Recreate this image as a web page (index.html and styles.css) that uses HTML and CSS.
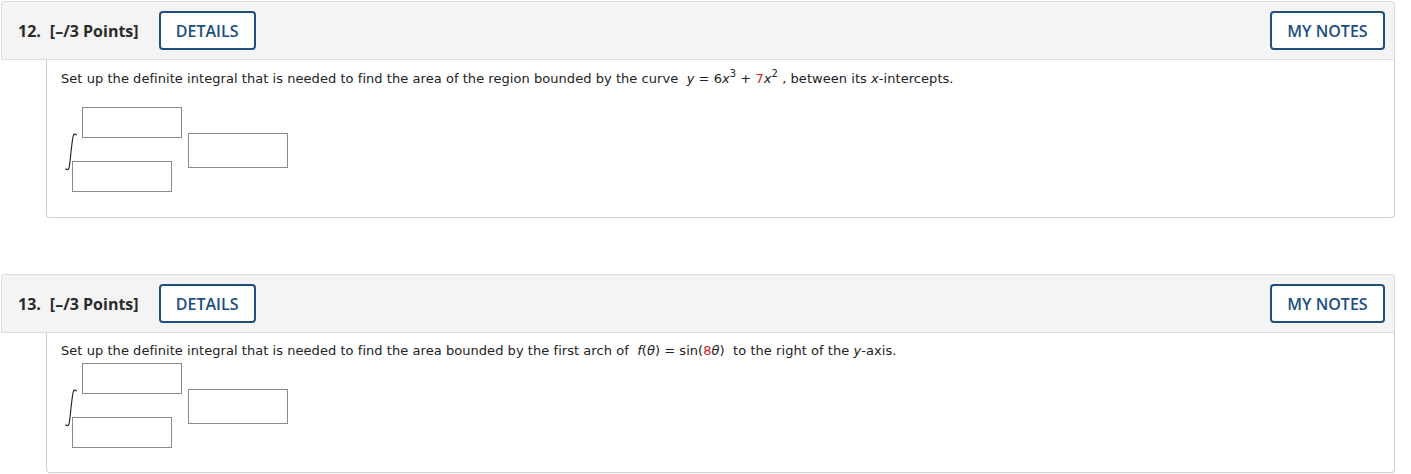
FILE: index.html
```html
<!DOCTYPE html>
<html>
<head>
<meta charset="utf-8">
<link rel="stylesheet" href="styles.css">
</head>
<body>
<div class="page">
  <section class="question q12">
    <header class="qhead">
      <div class="qtitle"><span class="qnum">12.</span><span class="qpts">[–/3 Points]</span></div>
      <button class="btn btn-details">DETAILS</button>
      <button class="btn btn-notes">MY NOTES</button>
    </header>
    <div class="qbody">
      <p class="prompt">Set up the definite integral that is needed to find the area of the region bounded by the curve &nbsp;<i>y</i> = 6<i>x</i><sup>3</sup> + <span class="red">7</span><i>x</i><sup>2</sup> , between its <i>x</i>-intercepts.</p>
      <div class="integral">
        <div class="limits">
          <svg class="sign" width="14" height="38" viewBox="0 0 14 38"><path d="M12.5 2.2 C11.8 0.6 9.8 0.8 9.2 2.8 C8.4 6 7.6 14 7 19 C6.4 25 5.8 32 5 35 C4.5 37 2.4 37.2 1.6 35.6" fill="none" stroke="#222" stroke-width="1.1"/></svg>
          <span class="box upper"></span>
          <span class="box lower"></span>
        </div>
        <span class="box integrand"></span>
      </div>
    </div>
  </section>
  <section class="question q13">
    <header class="qhead">
      <div class="qtitle"><span class="qnum">13.</span><span class="qpts">[–/3 Points]</span></div>
      <button class="btn btn-details">DETAILS</button>
      <button class="btn btn-notes">MY NOTES</button>
    </header>
    <div class="qbody">
      <p class="prompt">Set up the definite integral that is needed to find the area bounded by the first arch of &nbsp;<i>f</i>(<i>θ</i>) = sin(<span class="red">8</span><i>θ</i>) &nbsp;to the right of the <i>y</i>-axis.</p>
      <div class="integral">
        <div class="limits">
          <svg class="sign" width="14" height="38" viewBox="0 0 14 38"><path d="M12.5 2.2 C11.8 0.6 9.8 0.8 9.2 2.8 C8.4 6 7.6 14 7 19 C6.4 25 5.8 32 5 35 C4.5 37 2.4 37.2 1.6 35.6" fill="none" stroke="#222" stroke-width="1.1"/></svg>
          <span class="box upper"></span>
          <span class="box lower"></span>
        </div>
        <span class="box integrand"></span>
      </div>
    </div>
  </section>
</div>
</body>
</html>
```
FILE: styles.css
```css
html, body {
  margin: 0;
  padding: 0;
  background: #ffffff;
}
.page {
  width: 1394px;
  padding-left: 1px;
  padding-top: 1px;
}
.question {
  display: flex;
  flex-direction: column;
}
.q13 {
  margin-top: 56px;
}
.qhead {
  height: 57px;
  background: #f4f4f4;
  border: 1px solid #dcdcdc;
  border-radius: 3px 3px 0 0;
  display: flex;
  align-items: center;
  padding: 0 9px 0 16px;
  font-family: "Open Sans", sans-serif;
}
.qtitle {
  font-weight: 700;
  font-size: 16px;
  color: #2b2b2b;
  display: flex;
  gap: 9px;
  white-space: nowrap;
}
.btn {
  font-family: "Open Sans", sans-serif;
  font-weight: 600;
  font-size: 16px;
  color: #1d4e7f;
  background: #ffffff;
  border: 2px solid #1f4f7c;
  border-radius: 4px;
  height: 39px;
  padding: 0;
  white-space: nowrap;
  cursor: pointer;
}
.btn-details {
  margin-left: 20px;
  width: 97px;
}
.btn-notes {
  margin-left: auto;
  width: 115px;
}
.qbody {
  margin-left: 45px;
  background: #ffffff;
  border: 1px solid #cfcfcf;
  border-top: none;
  border-radius: 0 0 4px 4px;
  padding: 10px 14px 25px 14px;
  font-family: "DejaVu Sans", Verdana, sans-serif;
  font-size: 13px;
  color: #222;
}
.q13 .qbody {
  padding-top: 9px;
  padding-bottom: 24px;
}
.prompt {
  margin: 0;
  line-height: 18px;
  letter-spacing: 0.05px;
}
.prompt sup {
  font-size: 10px;
  line-height: 0;
  vertical-align: 6px;
}
.red {
  color: #d21a1a;
}
.integral {
  display: flex;
  align-items: center;
  margin-top: 19px;
  margin-left: 11px;
}
.q13 .integral {
  margin-top: 3px;
}
.limits {
  position: relative;
  display: flex;
  flex-direction: column;
  gap: 23px;
}
.box {
  display: block;
  box-sizing: border-box;
  border: 1px solid #8a8a8a;
  background: #fff;
}
.upper {
  width: 100px;
  height: 31px;
  margin-left: 10px;
}
.lower {
  width: 100px;
  height: 31px;
}
.integrand {
  width: 100px;
  height: 35px;
  margin-left: 6px;
  margin-top: 2px;
}
.sign {
  position: absolute;
  left: -8px;
  top: 26px;
}
```
